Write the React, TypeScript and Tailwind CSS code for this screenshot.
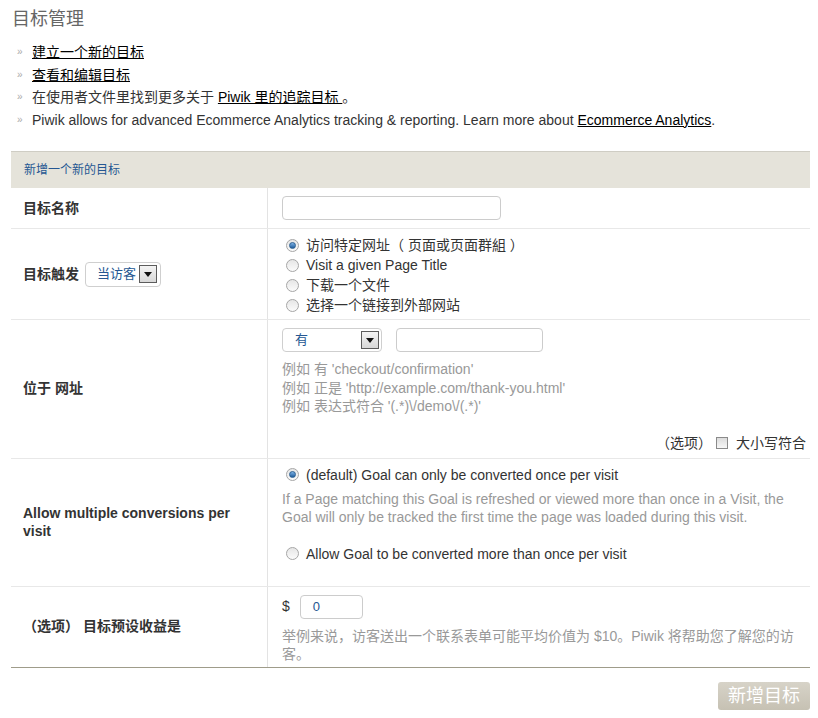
import React from "react";

const font = { fontFamily: '"Liberation Sans", Arial, "Noto Sans CJK SC", sans-serif' };

function Radio({ checked }: { checked?: boolean }) {
  return (
    <span className="inline-flex w-[13px] h-[13px] rounded-full border border-[#a6a6a6] bg-gradient-to-b from-[#e6e6e6] to-[#fbfbfb] items-center justify-center shrink-0">
      {checked && <span className="w-[7px] h-[7px] rounded-full bg-gradient-to-b from-[#7cb2e6] to-[#1d5c9b] border border-[#2b5f91]" />}
    </span>
  );
}

function Arrow() {
  return (
    <span className="inline-flex w-[18px] h-[18px] border border-[#5c5c5c] bg-gradient-to-b from-[#f4f4f4] to-[#d8d8d8] items-center justify-center">
      <svg width="8" height="5" viewBox="0 0 8 5"><path d="M0 0h8L4 5z" fill="#111" /></svg>
    </span>
  );
}

function Row({ label, children, last }: { label: React.ReactNode; children: React.ReactNode; last?: boolean }) {
  return (
    <div className={`flex ${last ? "border-b border-[#9f9c8a]" : "border-b border-[#e8e8e8]"}`}>
      <div className="w-[257px] shrink-0 pl-[12px] pr-[14px] flex items-center text-[14px] font-bold text-[#333] border-r border-[#e3e3e3]">
        {label}
      </div>
      <div className="flex-1 pl-[14px] pr-1">{children}</div>
    </div>
  );
}

export default function App() {
  return (
    <div className="w-[818px] h-[718px] bg-white text-[14px] text-[#333]" style={font}>
      <div className="pl-[12px] pt-[7px] text-[18px] leading-[24px] text-[#666]">目标管理</div>
      <ul className="mt-[10px] pl-[17px] leading-[22.5px]">
        {[
          <a className="underline text-black">建立一个新的目标</a>,
          <a className="underline text-black">查看和编辑目标</a>,
          <span>在使用者文件里找到更多关于 <a className="underline text-black">Piwik 里的追踪目标 </a>。</span>,
          <span>Piwik allows for advanced Ecommerce Analytics tracking &amp; reporting. Learn more about <a className="underline text-black">Ecommerce Analytics</a>.</span>,
        ].map((c, i) => (
          <li key={i} className="flex">
            <span className="w-[15px] text-[10px] text-[#aaa]">»</span>
            <span>{c}</span>
          </li>
        ))}
      </ul>

      <div className="ml-[11px] mt-[20px] w-[799px]">
        <div className="h-[37px] bg-[#e5e3da] border-t border-[#cfcdc4] flex items-center pl-[13px] text-[12px] text-[#255792]">新增一个新的目标</div>

        <Row label="目标名称">
          <div className="h-[40px] flex items-center">
            <input className="w-[219px] h-[24px] border border-[#cccccc] rounded-[4px] outline-none" />
          </div>
        </Row>

        <Row label={<span className="flex items-center gap-[6px]">目标触发
          <span className="inline-flex items-center w-[76px] h-[25px] border border-[#cfcfcf] rounded-[4px] pl-[11px] gap-[3px] font-normal text-[13px] text-[#255792]">当访客<Arrow /></span>
        </span>}>
          <div className="pt-[6px] pb-[4px] leading-[20px] text-[#333]">
            {["访问特定网址（ 页面或页面群組 ）", "Visit a given Page Title", "下载一个文件", "选择一个链接到外部网站"].map((t, i) => (
              <div key={i} className="flex items-center gap-[7px] pl-[4px] whitespace-pre"><Radio checked={i === 0} />{t}</div>
            ))}
          </div>
        </Row>

        <Row label="位于 网址">
          <div className="pt-[8px] pb-[4px]">
            <div className="flex gap-[14px]">
              <span className="inline-flex items-center justify-between w-[100px] h-[24px] border border-[#cfcfcf] rounded-[4px] pl-[12px] pr-[2px] text-[13px] text-[#255792]">有<Arrow /></span>
              <input className="w-[147px] h-[24px] border border-[#cccccc] rounded-[4px] outline-none" />
            </div>
            <div className="mt-[8px] text-[#999] leading-[18.5px]">
              <div>例如 有 'checkout/confirmation'</div>
              <div>例如 正是 'http://example.com/thank-you.html'</div>
              <div>例如 表达式符合 '(.*)\/demo\/(.*)'</div>
            </div>
            <div className="mt-[17px] flex justify-end items-center text-[#333]">
              <span>（选项）</span>
              <span className="ml-[4px] w-[12px] h-[12px] border border-[#8a8a8a] bg-gradient-to-b from-[#dcdcdc] to-[#f7f7f7]" />
              <span className="ml-[8px]">大小写符合</span>
            </div>
          </div>
        </Row>

        <Row label={<span className="leading-[18px]">Allow multiple conversions per visit</span>}>
          <div className="pt-[6px] pb-[22px]">
            <div className="flex items-center gap-[7px] pl-[4px] leading-[20px]"><Radio checked />(default) Goal can only be converted once per visit</div>
            <div className="text-[#999] leading-[18px] mt-[5px]">If a Page matching this Goal is refreshed or viewed more than once in a Visit, the Goal will only be tracked the first time the page was loaded during this visit.</div>
            <div className="flex items-center gap-[7px] pl-[4px] leading-[20px] mt-[18px]"><Radio />Allow Goal to be converted more than once per visit</div>
          </div>
        </Row>

        <Row label="（选项） 目标预设收益是" last>
          <div className="pt-[8px] pb-[4px]">
            <div className="flex items-center gap-[10px]">
              <span>$</span>
              <span className="inline-flex items-center w-[63px] h-[24px] border border-[#cccccc] rounded-[4px] pl-[12px] text-[13px] text-[#255792]">0</span>
            </div>
            <div className="text-[#999] leading-[18px] mt-[8px] pr-[10px]">举例来说，访客送出一个联系表单可能平均价值为 $10。Piwik 将帮助您了解您的访客。</div>
          </div>
        </Row>

        <div className="flex justify-end mt-[14px]">
          <button className="w-[92px] h-[28px] rounded-[3px] bg-gradient-to-b from-[#d7d3c8] to-[#c6c1b3] text-white text-[18px] leading-[28px]">新增目标</button>
        </div>
      </div>
    </div>
  );
}
